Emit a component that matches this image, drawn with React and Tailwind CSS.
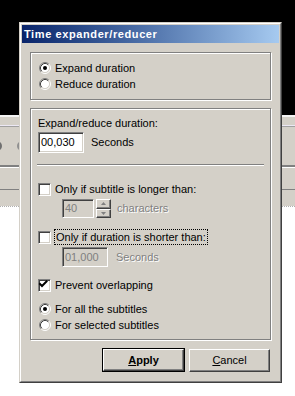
import React from 'react';

const ui = "font-['Liberation_Sans',Arial,sans-serif] text-[11px] leading-[13px] text-black";

const sunken =
  'border border-t-[#808080] border-l-[#808080] border-b-white border-r-white shadow-[inset_1px_1px_0_#404040,inset_-1px_-1px_0_#d4d0c8]';
const raised =
  'border border-t-white border-l-white border-b-[#404040] border-r-[#404040] shadow-[inset_-1px_-1px_0_#808080]';
const etched = 'border border-[#808080] shadow-[inset_1px_1px_0_#fff,1px_1px_0_#fff]';
const disabledText = 'text-[#808080] [text-shadow:1px_1px_0_#fff]';

function RadioDot({ checked }) {
  return (
    <svg width="12" height="12" viewBox="0 0 12 12" className="ml-[1px] shrink-0">
      <circle cx="6" cy="6" r="4.5" fill="#fff" />
      <path d="M2.11 9.89A5.5 5.5 0 0 1 9.89 2.11" fill="none" stroke="#808080" />
      <path d="M9.89 2.11A5.5 5.5 0 0 1 2.11 9.89" fill="none" stroke="#fff" />
      <path d="M2.82 9.18A4.5 4.5 0 0 1 9.18 2.82" fill="none" stroke="#404040" />
      <path d="M9.18 2.82A4.5 4.5 0 0 1 2.82 9.18" fill="none" stroke="#d4d0c8" />
      {checked && <circle cx="6" cy="6" r="2" fill="#000" />}
    </svg>
  );
}

function Radio({ checked, label }) {
  return (
    <div className="flex h-[16px] items-center">
      <RadioDot checked={checked} />
      <span className="ml-[4px]">{label}</span>
    </div>
  );
}

function Box({ checked }) {
  return (
    <div className={`w-[13px] h-[13px] shrink-0 bg-white ${sunken}`}>
      {checked && (
        <svg width="11" height="11" viewBox="0 0 11 11" className="-ml-[1px] -mt-[1px]">
          <path d="M2 5L4 7L8.5 2.5" fill="none" stroke="#000" strokeWidth="2" strokeLinecap="square" />
        </svg>
      )}
    </div>
  );
}

function Check({ checked, label, focus }) {
  return (
    <div className="flex h-[16px] items-center">
      <Box checked={checked} />
      {focus ? (
        <span className="ml-[3px] border border-dotted border-black px-[1px] leading-[14px]">{label}</span>
      ) : (
        <span className="ml-[4px]">{label}</span>
      )}
    </div>
  );
}

function Field({ value, disabled, className }) {
  return (
    <div
      className={`h-full flex items-center pl-[2px] ${sunken} ${
        disabled ? 'bg-[#d4d0c8] text-[#808080]' : 'bg-white'
      } ${className}`}
    >
      {value}
    </div>
  );
}

function SpinArrow({ up }) {
  return (
    <div className={`flex-1 flex items-center justify-center bg-[#d4d0c8] ${raised}`}>
      <svg width="5" height="3" viewBox="0 0 5 3">
        <path d={up ? 'M2.5 0L5 3H0Z' : 'M0 0H5L2.5 3Z'} fill="#808080" />
      </svg>
    </div>
  );
}

function Dialog() {
  return (
    <div className="absolute left-[19px] top-[22px] w-[263px] h-[361px] border border-t-[#d4d0c8] border-l-[#d4d0c8] border-b-[#404040] border-r-[#404040]">
      <div className="h-full border border-t-white border-l-white border-b-[#808080] border-r-[#808080] bg-[#d4d0c8] p-[1px]">
        <div className="h-[18px] flex items-center pl-[2px] bg-gradient-to-r from-[#0a246a] to-[#a6caf0] text-white font-bold tracking-[0.6px]">
          Time expander/reducer
        </div>

        <div className="px-[8px] pt-[9px] flex flex-col">
          <div className={`h-[48px] pt-[7px] pl-[7px] flex flex-col ${etched}`}>
            <Radio checked label="Expand duration" />
            <Radio label="Reduce duration" />
          </div>

          <div className={`mt-[8px] h-[232px] pl-[7px] flex flex-col ${etched}`}>
            <div className="mt-[7px] h-[14px] flex items-center">Expand/reduce duration:</div>
            <div className="mt-[2px] h-[21px] flex items-center">
              <Field value="00,030" className="w-[46px]" />
              <span className="ml-[7px]">Seconds</span>
            </div>
            <div className="mt-[11px] -ml-[1px] mr-[6px] h-[2px] border-t border-t-[#808080] border-b border-b-white" />

            <div className="mt-[15px]">
              <Check label="Only if subtitle is longer than:" />
            </div>
            <div className="mt-[2px] ml-[24px] h-[19px] flex items-center">
              <Field value="40" disabled className="w-[32px]" />
              <div className="ml-[2px] w-[15px] h-full flex flex-col">
                <SpinArrow up />
                <SpinArrow />
              </div>
              <span className={`ml-[6px] ${disabledText}`}>characters</span>
            </div>

            <div className="mt-[11px]">
              <Check label="Only if duration is shorter than:" focus />
            </div>
            <div className="mt-[2px] ml-[24px] h-[20px] flex items-center">
              <Field value="01,000" disabled className="w-[46px]" />
              <span className={`ml-[8px] ${disabledText}`}>Seconds</span>
            </div>

            <div className="mt-[10px]">
              <Check checked label="Prevent overlapping" />
            </div>

            <div className="mt-[8px] flex flex-col">
              <Radio checked label="For all the subtitles" />
              <Radio label="For selected subtitles" />
            </div>
          </div>

          <div className="mt-[8px] pr-[1px] flex justify-end items-center gap-[4px]">
            <button className="w-[83px] h-[24px] border border-black bg-[#d4d0c8] p-0">
              <div className={`h-full flex items-center justify-center font-bold ${raised}`}>
                <span>
                  <span className="underline">A</span>pply
                </span>
              </div>
            </button>
            <button className={`w-[81px] h-[23px] bg-[#d4d0c8] flex items-center justify-center ${raised}`}>
              <span>
                <span className="underline">C</span>ancel
              </span>
            </button>
          </div>
        </div>
      </div>
    </div>
  );
}

export default function App() {
  return (
    <div className={`relative w-[295px] h-[396px] overflow-hidden bg-white ${ui}`}>
      <div className="flex flex-col h-full">
        <div className="h-[115px] bg-black" />
        <div className="h-[2px] bg-[#f4f4f4]" />
        <div className="h-[8px] bg-[#d4d0c8]" />
        <div className="h-[1px] bg-[#ece8f4]" />
        <div className="h-[1px] bg-[#a0a0a0]" />
        <div className="h-[38px] bg-[#d4d0c8] flex items-center">
          <div className="-ml-[8px] w-[10px] h-[10px] rounded-full border-2 border-[#707070]" />
          <div className="ml-[15px] w-[10px] h-[10px] rounded-full border-2 border-[#909090]" />
        </div>
        <div className="h-[2px] bg-[#808080]" />
        <div className="h-[1px] bg-white" />
        <div className="h-[21px] bg-[#d4d0c8]" />
        <div className="h-[1px] bg-[#808080]" />
        <div className="h-[16px] bg-[#d4d0c8]" />
        <div className="flex-1 bg-white border-t border-dotted border-[#b0b0b0]" />
      </div>
      <Dialog />
    </div>
  );
}
